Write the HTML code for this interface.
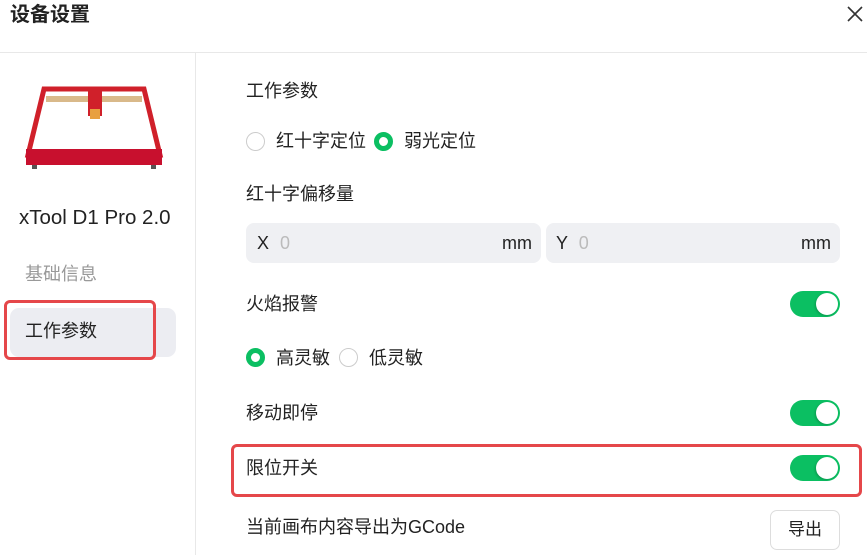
<!DOCTYPE html>
<html><head><meta charset="utf-8"><style>
*{margin:0;padding:0;box-sizing:border-box}
body{width:867px;height:555px;overflow:hidden;background:#fff;font-family:"Liberation Sans","Noto Sans CJK SC",sans-serif;color:#222;position:relative}
.a{position:absolute;white-space:nowrap}
.t{font-size:18px;line-height:24px}
.radio{position:absolute;width:19px;height:19px;border-radius:50%;border:1px solid #ccc;background:#fff}
.radio.on{border:5px solid #0bbf62}
.tog{position:absolute;left:790px;width:50px;height:26px;border-radius:13px;background:#0bbf62}
.tog:after{content:"";position:absolute;right:2px;top:2px;width:22px;height:22px;border-radius:50%;background:#fff;box-shadow:-1px 1px 2px rgba(0,0,0,.2)}
.inp{position:absolute;top:223px;height:40px;background:#eff0f3;border-radius:8px}
</style></head><body>
<div class="a" style="left:10px;top:2px;font-size:20px;font-weight:bold;line-height:26px">设备设置</div>
<svg class="a" style="left:846px;top:5px" width="18" height="18" viewBox="0 0 18 18"><path d="M2 2L16 16M16 2L2 16" stroke="#333" stroke-width="1.6"/></svg>
<div class="a" style="left:0;top:52px;width:867px;height:1px;background:#e8e8e8"></div>
<div class="a" style="left:195px;top:53px;width:1px;height:502px;background:#e8e8e8"></div>
<svg class="a" style="left:22px;top:85px" width="146" height="90" viewBox="0 0 146 90">
<polygon points="22,4 122,4 138,70 6,70" fill="none" stroke="#d0202a" stroke-width="5"/>
<rect x="24" y="11" width="96" height="6" fill="#d9b98a"/>
<rect x="66" y="5" width="14" height="26" fill="#d0202a"/>
<rect x="68" y="24" width="10" height="10" fill="#e8a040"/>
<path d="M4 64L140 64L140 80L4 80Z" fill="#c8102e"/>
<rect x="10" y="80" width="5" height="4" fill="#555"/><rect x="129" y="80" width="5" height="4" fill="#555"/>
</svg>
<div class="a" style="left:19px;top:205px;font-size:20.5px;line-height:26px">xTool D1 Pro 2.0</div>
<div class="a t" style="left:25px;top:262px;color:#999">基础信息</div>
<div class="a" style="left:10px;top:308px;width:166px;height:49px;background:#ecedf2;border-radius:9px"></div>
<div class="a" style="left:4px;top:300px;width:152px;height:60px;border:3px solid #e5474a;border-radius:6px"></div>
<div class="a t" style="left:25px;top:319px">工作参数</div>

<div class="a t" style="left:246px;top:79px">工作参数</div>
<div class="radio" style="left:246px;top:132px"></div>
<div class="a t" style="left:276px;top:129px">红十字定位</div>
<div class="radio on" style="left:374px;top:132px"></div>
<div class="a t" style="left:404px;top:129px">弱光定位</div>
<div class="a t" style="left:246px;top:182px">红十字偏移量</div>
<div class="inp" style="left:246px;width:295px"></div>
<div class="a t" style="left:257px;top:231px">X <span style="color:#bbb;margin-left:6px">0</span></div>
<div class="a t" style="left:502px;top:231px">mm</div>
<div class="inp" style="left:546px;width:294px"></div>
<div class="a t" style="left:556px;top:231px">Y <span style="color:#bbb;margin-left:6px">0</span></div>
<div class="a t" style="left:801px;top:231px">mm</div>
<div class="a t" style="left:246px;top:292px">火焰报警</div>
<div class="tog" style="top:291px"></div>
<div class="radio on" style="left:246px;top:348px"></div>
<div class="a t" style="left:276px;top:346px">高灵敏</div>
<div class="radio" style="left:339px;top:348px"></div>
<div class="a t" style="left:369px;top:346px">低灵敏</div>
<div class="a t" style="left:246px;top:401px">移动即停</div>
<div class="tog" style="top:400px"></div>
<div class="a" style="left:231px;top:444px;width:631px;height:53px;border:3px solid #e5474a;border-radius:6px"></div>
<div class="a t" style="left:246px;top:456px">限位开关</div>
<div class="tog" style="top:455px"></div>
<div class="a t" style="left:246px;top:515px">当前画布内容导出为GCode</div>
<div class="a" style="left:770px;top:510px;width:70px;height:40px;border:1px solid #ddd;border-radius:7px;font-size:17px;line-height:38px;text-align:center">导出</div>
</body></html>
